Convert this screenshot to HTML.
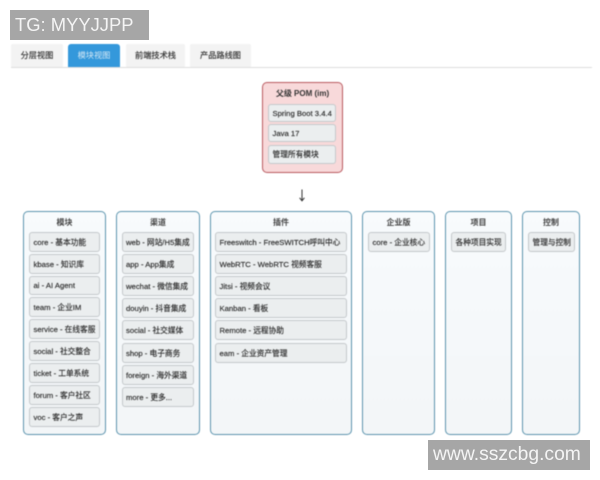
<!DOCTYPE html>
<html lang="zh">
<head>
<meta charset="utf-8">
<style>
html,body{margin:0;padding:0;background:#fff;}
#p{position:relative;width:600px;height:480px;overflow:hidden;background:#fff;font-family:"Liberation Sans","Noto Sans CJK SC",sans-serif;color:#333;}
#c{position:absolute;left:0;top:0;width:600px;height:480px;filter:blur(.5px);}
#c div{position:absolute;box-sizing:border-box;white-space:nowrap;}
.t{top:44px;height:23px;background:#f3f3f3;border-radius:2px 2px 0 0;font-size:8.2px;line-height:23px;text-align:center;color:#333;-webkit-text-stroke:.15px #333;}
.col{top:211px;height:224px;background:linear-gradient(#f8fbfd,#f3f6f8);border:1.4px solid #5c94ae;border-radius:5px;}
.h{top:215.5px;height:14px;line-height:14px;font-size:8px;font-weight:bold;text-align:center;color:#444;}
.i{height:19px;line-height:18px;background:#ebeeef;border:1px solid #c4c8cb;border-radius:3px;font-size:7.7px;color:#2c2c2c;padding-left:3.5px;-webkit-text-stroke:.15px #2c2c2c;}
.w{background:#a6a6a6;color:#f4f4f4;}
</style>
</head>
<body>
<div id="p">
<div id="c">
  <div style="left:11px;top:67px;width:581px;height:1px;background:#dedede"></div>
  <div class="t" style="left:11px;width:52px">分层视图</div>
  <div class="t" style="left:68px;width:52px;background:#3498db;color:#d4e8f5;-webkit-text-stroke:0;border-radius:3px 3px 0 0">模块视图</div>
  <div class="t" style="left:126px;width:59px">前端技术栈</div>
  <div class="t" style="left:190px;width:61px">产品路线图</div>

  <div style="left:262px;top:82px;width:81px;height:91px;background:#f8d9da;border:1.5px solid #b95a60;border-radius:5px"></div>
  <div class="h" style="left:262px;width:81px;top:87px;color:#333">父级 POM (im)</div>
  <div class="i" style="left:268px;top:104px;width:68px;height:18px;line-height:17px">Spring Boot 3.4.4</div>
  <div class="i" style="left:268px;top:124px;width:68px;height:18px;line-height:17px">Java 17</div>
  <div class="i" style="left:268px;top:145px;width:68px;height:19px">管理所有模块</div>

  <svg style="position:absolute;left:296px;top:188px" width="12" height="14" viewBox="0 0 12 14"><path d="M6 1.5V12.5M3.6 9.8L6 12.8L8.4 9.8" fill="none" stroke="#333" stroke-width="1"/></svg>

  <div class="col" style="left:23px;width:83px"></div>
  <div class="h" style="left:23px;width:83px">模块</div>
  <div class="i" style="left:29px;top:232px;width:71px;height:20px;line-height:19px">core - 基本功能</div>
  <div class="i" style="left:29px;top:254px;width:71px;height:20px;line-height:19px">kbase - 知识库</div>
  <div class="i" style="left:29px;top:276px;width:71px;height:19px">ai - AI Agent</div>
  <div class="i" style="left:29px;top:297px;width:71px;height:20px;line-height:19px">team - 企业IM</div>
  <div class="i" style="left:29px;top:319px;width:71px;height:20px;line-height:19px">service - 在线客服</div>
  <div class="i" style="left:29px;top:341px;width:71px;height:20px;line-height:19px">social - 社交整合</div>
  <div class="i" style="left:29px;top:363px;width:71px;height:20px;line-height:19px">ticket - 工单系统</div>
  <div class="i" style="left:29px;top:385px;width:71px;height:20px;line-height:19px">forum - 客户社区</div>
  <div class="i" style="left:29px;top:407px;width:71px;height:20px;line-height:19px">voc - 客户之声</div>

  <div class="col" style="left:116px;width:84px"></div>
  <div class="h" style="left:116px;width:84px">渠道</div>
  <div class="i" style="left:122px;top:232px;width:72px;height:20px;line-height:19px;padding-left:3px">web - 网站/H5集成</div>
  <div class="i" style="left:122px;top:254px;width:72px;height:20px;line-height:19px;padding-left:3px">app - App集成</div>
  <div class="i" style="left:122px;top:276px;width:72px;height:20px;line-height:19px;padding-left:3px">wechat - 微信集成</div>
  <div class="i" style="left:122px;top:298px;width:72px;height:20px;line-height:19px;padding-left:3px">douyin - 抖音集成</div>
  <div class="i" style="left:122px;top:320px;width:72px;height:20px;line-height:19px;padding-left:3px">social - 社交媒体</div>
  <div class="i" style="left:122px;top:343px;width:72px;height:20px;line-height:19px;padding-left:3px">shop - 电子商务</div>
  <div class="i" style="left:122px;top:365px;width:72px;height:20px;line-height:19px;padding-left:3px">foreign - 海外渠道</div>
  <div class="i" style="left:122px;top:387px;width:72px;height:20px;line-height:19px;padding-left:3px">more - 更多...</div>

  <div class="col" style="left:210px;width:142px"></div>
  <div class="h" style="left:210px;width:142px">插件</div>
  <div class="i" style="left:215px;top:232px;width:132px;height:20px;line-height:19px">Freeswitch - FreeSWITCH呼叫中心</div>
  <div class="i" style="left:215px;top:254px;width:132px;height:20px;line-height:19px">WebRTC - WebRTC 视频客服</div>
  <div class="i" style="left:215px;top:276px;width:132px;height:20px;line-height:19px">Jitsi - 视频会议</div>
  <div class="i" style="left:215px;top:298px;width:132px;height:20px;line-height:19px">Kanban - 看板</div>
  <div class="i" style="left:215px;top:320px;width:132px;height:20px;line-height:19px">Remote - 远程协助</div>
  <div class="i" style="left:215px;top:343px;width:132px;height:20px;line-height:19px">eam - 企业资产管理</div>

  <div class="col" style="left:362px;width:73px"></div>
  <div class="h" style="left:362px;width:73px">企业版</div>
  <div class="i" style="left:368px;top:232px;width:62px;height:20px;line-height:19px">core - 企业核心</div>

  <div class="col" style="left:445px;width:67px"></div>
  <div class="h" style="left:445px;width:67px">项目</div>
  <div class="i" style="left:451px;top:232px;width:55px;height:20px;line-height:19px">各种项目实现</div>

  <div class="col" style="left:522px;width:58px"></div>
  <div class="h" style="left:522px;width:58px">控制</div>
  <div class="i" style="left:528px;top:232px;width:47px;height:20px;line-height:19px">管理与控制</div>
</div>

<div class="w" style="position:absolute;left:10px;top:10px;width:139px;height:30px;line-height:30px;font-size:18.4px;padding-left:5px;box-sizing:border-box">TG: MYYJJPP</div>
<div class="w" style="position:absolute;left:428px;top:440px;width:162px;height:30px;line-height:29px;font-size:19.3px;padding-left:5px;box-sizing:border-box">www.sszcbg.com</div>
</div>
</body>
</html>
